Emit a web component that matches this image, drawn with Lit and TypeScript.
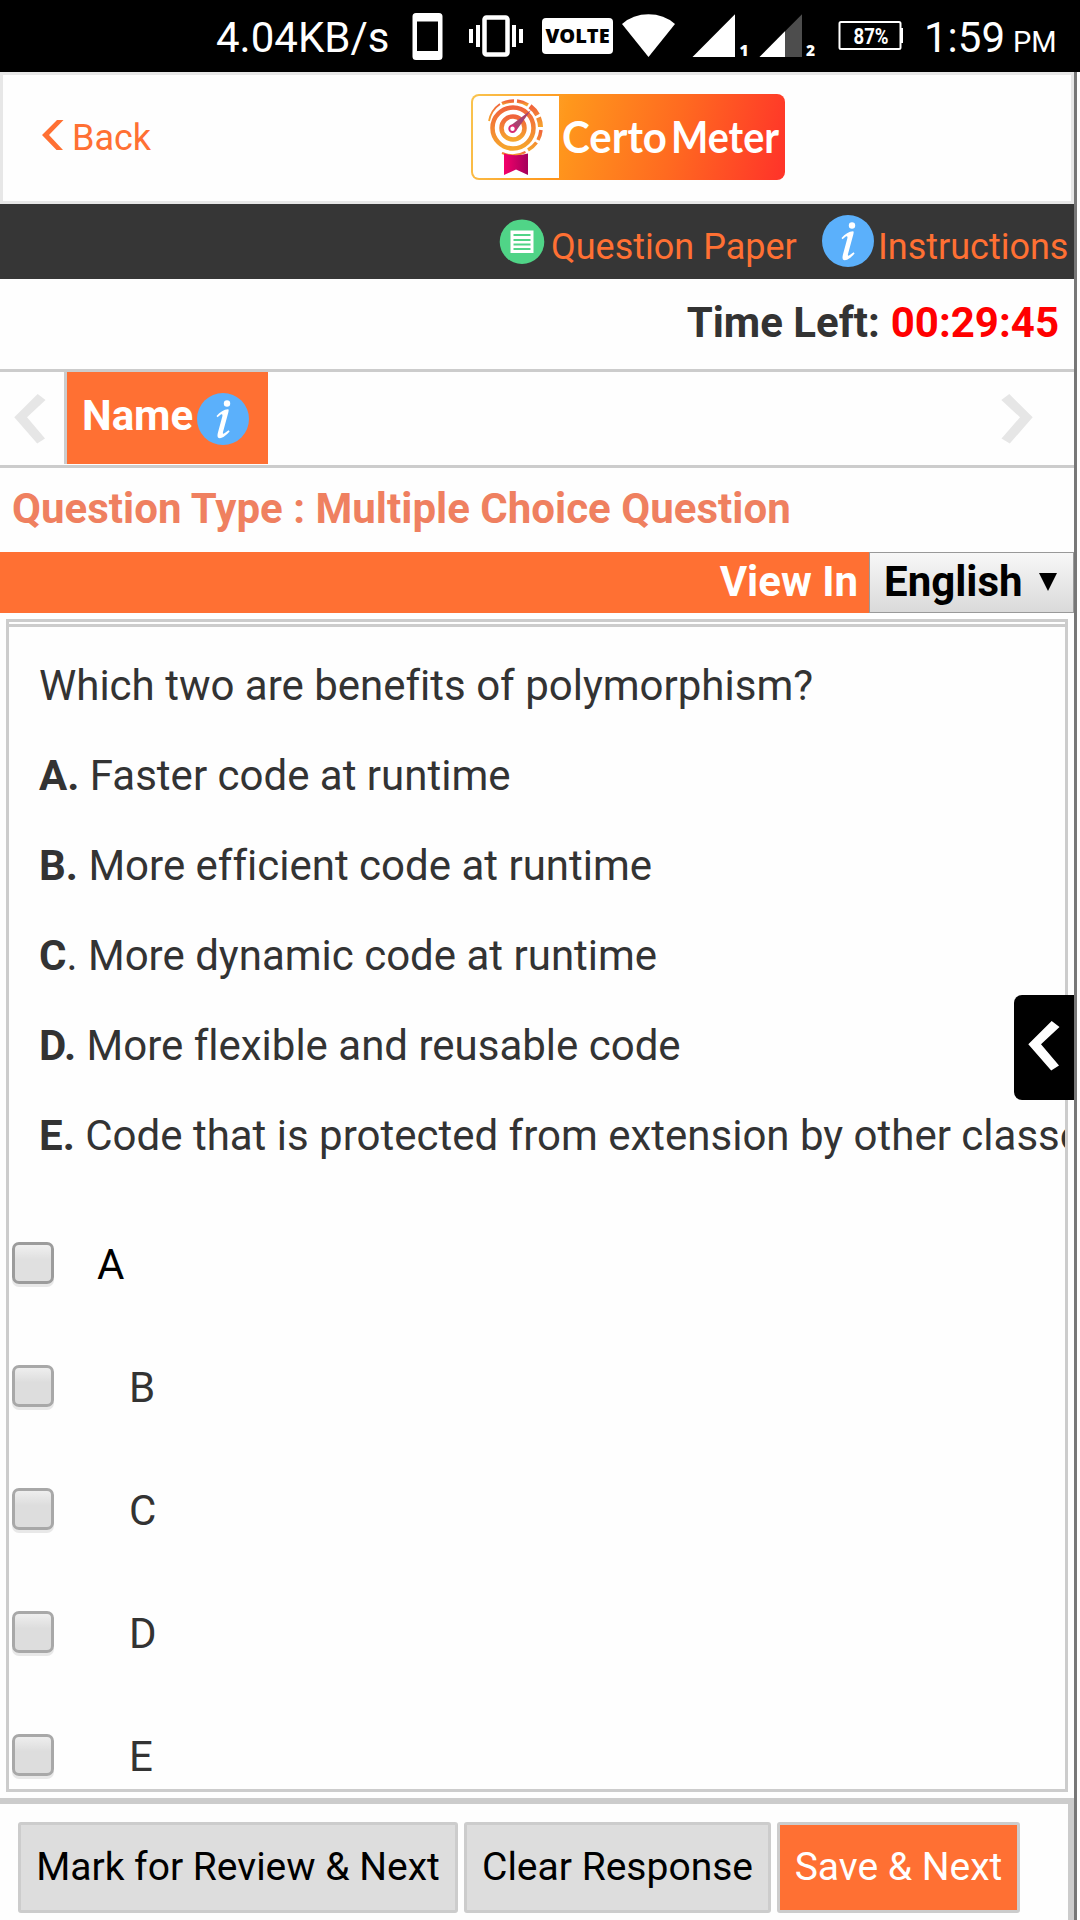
import { LitElement, html, css, svg } from "lit";
import { customElement, property } from "lit/decorators.js";

const STATEMENTS = [
  { key: "A.", dot: "", text: "Faster code at runtime" },
  { key: "B.", dot: "", text: "More efficient code at runtime" },
  { key: "C", dot: ".", text: "More dynamic code at runtime" },
  { key: "D.", dot: "", text: "More flexible and reusable code" },
  { key: "E.", dot: "", text: "Code that is protected from extension by other classes" },
];

const CHOICES = ["A", "B", "C", "D", "E"];

@customElement("info-badge")
class InfoBadge extends LitElement {
  static styles = css`
    :host { display: block; width: 52px; height: 52px; }
    svg { display: block; }
  `;
  render() {
    return html`<svg width="52" height="52" viewBox="0 0 52 52">
      <circle cx="26" cy="26" r="26" fill="#5bb0fb" />
      <circle cx="30" cy="10.5" r="3.2" fill="#fff" />
      <path d="M19.5 23 C23 19 27 16.5 31 16.3 C32 16.3 31.7 18 31.3 19.5 L26 39 C25.6 40.8 26.2 41.2 27.4 40.3 L31.6 37.2 L32.6 38.6 C29.5 42 26 45.2 22.8 45.2 C20.2 45.2 20.2 42.6 20.9 39.8 L25.3 23.4 C25.8 21.4 25.2 20.8 23.8 21.6 L20.5 24.2 Z" fill="#fff" />
    </svg>`;
  }
}

@customElement("status-bar")
class StatusBar extends LitElement {
  static styles = css`
    :host {
      display: grid;
      box-sizing: border-box;
      height: 72px;
      padding-left: 216px;
      grid-template-columns: 196px 57px 73px 80px 69px 68px 78px 87px 89px 1fr;
      background: #000;
      color: #fff;
      white-space: nowrap;
    }
    svg { display: block; }
    .speed, .clock { font-size: 42px; line-height: 50px; padding-top: 13px; }
    .volte {
      box-sizing: border-box; width: 71px; height: 36px; margin-top: 18px; border-radius: 4px;
      background: #fff; color: #000; font: 800 20px/36px "Open Sans", sans-serif; text-align: center;
    }
    .pm { font-size: 29px; line-height: 50px; padding-top: 17px; }
    .sim { font: 800 15.500px/20px "Open Sans", sans-serif; }
  `;
  render() {
    return html`
      <span class="speed">4.04KB/s</span>
      <svg width="31" height="72"><path fill="#fff" fill-rule="evenodd" d="M4 13H27a3.5 3.5 0 0 1 3.500 3.500V56.500a3.500 3.500 0 0 1-3.500 3.500H4A3.500 3.500 0 0 1 .5 56.500V16.500A3.500 3.500 0 0 1 4 13ZM5 21.500V51H26V21.500Z" /></svg>
      <svg width="54" height="72" fill="#fff">
        <path d="M0 29h4v14H0zM7 25h4v22H7zM43 25h4v22h-4zM50 29h4v14h-4z" />
        <rect x="15.500" y="17.500" width="23" height="37" rx="2" fill="none" stroke="#fff" stroke-width="4.500" />
      </svg>
      <span class="volte">VOLTE</span>
      <svg width="54" height="72"><path fill="#fff" d="M0 24Q11 14.300 26.500 14.300T53 24L26.500 57Z" /></svg>
      <svg width="60" height="72">
        <path fill="#fff" d="M1.500 57H44V14.300Z" />
        <text class="sim" x="48.500" y="56" fill="#fff">1</text>
      </svg>
      <svg width="62" height="72">
        <path fill="#4d4d4d" d="M.5 57H43V14.300Z" /><path fill="#fff" d="M.5 57H26V31.300Z" />
        <text class="sim" x="47" y="56" fill="#fff">2</text>
      </svg>
      <svg width="68" height="72">
        <rect x="2.500" y="22" width="61" height="27" rx="1.500" fill="none" stroke="#fff" stroke-width="2" />
        <path fill="#fff" d="M63 28h3v15h-3z" />
        <text x="16.500" y="43.600" fill="#fff" font-weight="700" font-size="22" textLength="35" lengthAdjust="spacingAndGlyphs">87%</text>
      </svg>
      <span class="clock">1:59</span>
      <span class="pm">PM</span>
    `;
  }
}

@customElement("brand-logo")
class BrandLogo extends LitElement {
  static styles = css`
    :host { display: block; width: 314px; height: 86px; }
    svg { display: block; }
    .name { font: 700 44px/50px Lato, sans-serif; fill: #fff; }
  `;
  render() {
    return html`<svg width="314" height="86" viewBox="0 0 314 86">
      <defs>
        <linearGradient id="plate" gradientUnits="userSpaceOnUse" x1="0" y1="10" x2="308" y2="86">
          <stop offset="0" stop-color="#f9c34e" /><stop offset=".3" stop-color="#ff971c" />
          <stop offset=".65" stop-color="#ff6a20" /><stop offset="1" stop-color="#ff3529" />
        </linearGradient>
        <linearGradient id="ring" x1="0" y1="0" x2="0" y2="1">
          <stop offset="0" stop-color="#f0643c" /><stop offset="1" stop-color="#f6a52c" />
        </linearGradient>
        <linearGradient id="ribbon"><stop offset="0" stop-color="#f5006a" /><stop offset="1" stop-color="#a4005c" /></linearGradient>
      </defs>
      <rect width="314" height="86" rx="8" fill="url(#plate)" />
      <path d="M8 2H88V84H8a6 6 0 0 1-6-6V8a6 6 0 0 1 6-6Z" fill="#fff" />
      <g fill="none" stroke="url(#ring)">
        <circle cx="42" cy="34" r="20.500" stroke-width="4.500" />
        <circle cx="42" cy="34" r="11.500" stroke-width="4.500" />
        <path d="M18 27A26.500 26.500 0 0 1 29 10" stroke-width="1.800" />
        <path d="M31 9.500A27 27 0 0 1 43 7M46 7A27 27 0 0 1 57 11" stroke-width="3.500" />
        <path d="M59 12.300A27.500 27.500 0 0 1 66.500 21M67.500 23.500A27.500 27.500 0 0 1 69.500 33" stroke-width="5" />
        <path d="M70 36A28 28 0 0 1 67 46M65.500 48.500A28 28 0 0 1 57 56" stroke-width="3.500" />
        <path d="M54.500 58A27 27 0 0 1 31 59" stroke-width="2" />
      </g>
      <path d="M39 32L60 16L45 37Z" fill="#a84370" />
      <circle cx="41.500" cy="34.800" r="3.200" fill="#fff" stroke="#d62c72" stroke-width="2" />
      <path d="M33 59.500Q45 63 57 59.500V81L45 75.500L33 81Z" fill="url(#ribbon)" />
      <text class="name" x="91" y="58.500" textLength="105" lengthAdjust="spacingAndGlyphs">Certo</text>
      <text class="name" x="200" y="58.500" textLength="108" lengthAdjust="spacingAndGlyphs">Meter</text>
    </svg>`;
  }
}

@customElement("answer-choice")
class AnswerChoice extends LitElement {
  @property() label = "";
  @property({ type: Boolean, reflect: true }) active = false;

  static styles = css`
    :host { display: flex; align-items: flex-start; height: 123px; font-size: 42px; line-height: 50px; color: #333; }
    .box {
      appearance: none; box-sizing: border-box; width: 42px; height: 42px; margin: 2px 75px 0 3px;
      border: 3px solid #a8a8a8; border-radius: 7px;
      background: linear-gradient(#eee, #ddd 40%, #ddd);
      box-shadow: 0 3px 0 #e8e8e8;
    }
    :host([active]) { color: #000; }
    :host([active]) .box { border-color: #9c9c9c; margin-right: 43px; background: linear-gradient(#f0f0f0, #e0e0e0 40%, #e0e0e0); }
  `;
  render() {
    return html`<input class="box" type="checkbox" aria-label=${this.label} /><span>${this.label}</span>`;
  }
}

@customElement("app-root")
class AppRoot extends LitElement {
  static styles = css`
    :host {
      display: block; width: 1080px; height: 1920px; overflow: hidden; background: #fefefe;
      font-family: Roboto, sans-serif; color: #333; font-variant-ligatures: none;
    }
    svg { display: block; }
    .page {
      position: relative; box-sizing: border-box; width: 1077px; height: 1848px;
      display: flex; flex-direction: column; border-right: 3px solid #777; white-space: nowrap;
    }
    .page > * { flex: none; box-sizing: border-box; }
    .header { display: flex; height: 132px; border: 3px solid #e7e7e7; padding: 19px 0 0 39px; }
    .back { display: flex; width: 429px; color: #ff7033; font-size: 36px; line-height: 44px; }
    .back svg { margin: 26px 8px 0 0; }
    .back span { padding-top: 22px; }
    .tools { display: flex; height: 75px; background: #363636; color: #ff7033; font-size: 36px; line-height: 44px; padding-left: 499px; }
    .tools span { padding-top: 21px; }
    .tools svg { margin: 15px 6px 0 0; }
    .paper { width: 271px; }
    .tools info-badge { margin: 11px 4px 0 0; }
    .timer { display: flex; justify-content: flex-end; gap: 11px; height: 93px; border-bottom: 3px solid #ccc; padding: 19px 15px 0 0; font-weight: 700; font-size: 42px; line-height: 50px; }
    .clock { color: #f00; }
    .tabs { display: flex; height: 96px; border-bottom: 3px solid #ccc; }
    .prev { width: 64px; padding: 22px 0 0 14px; box-sizing: border-box; }
    .tab { display: flex; box-sizing: border-box; width: 204px; height: 92px; padding-left: 15px; border-left: 3px solid #ccc; background: #ff7033; color: #fff; font-weight: 700; font-size: 42px; line-height: 50px; }
    .tab span { width: 115px; padding-top: 19px; }
    .tab info-badge { margin-top: 21px; }
    .next { margin-left: auto; padding: 22px 41px 0 0; }
    .kind { height: 84px; padding: 16px 0 0 12px; color: #ef8060; font-weight: 700; font-size: 42px; line-height: 50px; letter-spacing: .02px; }
    .view { display: flex; justify-content: flex-end; height: 61px; background: #ff7033; color: #fff; font-weight: 700; font-size: 42px; line-height: 50px; }
    .view > span { padding: 5px 11px 0 0; }
    .lang { display: flex; box-sizing: border-box; justify-content: space-between; width: 205px; border: 1px solid #999; background: linear-gradient(#f7f7f7, #dadada); color: #000; padding: 4px 16px 0 14px; }
    .lang svg { margin-top: 16px; }
    .question { height: 1173px; width: 1062px; margin: 6px 0 0 6px; border: 3px solid #ccc; overflow: hidden; padding-top: 2px; }
    .statement { border-top: 3px solid #ccc; padding: 34px 0 0 30px; font-size: 42px; line-height: 50px; }
    .line { margin: 0 0 40px; }
    .choices { padding-top: 39px; }
    .footer { display: flex; align-items: flex-start; gap: 6px; height: 122px; margin-top: 6px; border-top: 6px solid #ccc; border-right: 6px solid #ccc; padding: 18px 0 0 18px; }
    .btn {
      box-sizing: border-box; height: 91px; margin: 0; padding: 0 0 1px; border: 3px solid #ccc; border-radius: 3px; background: #ddd; color: #000;
      font: 39px/50px Roboto, sans-serif; text-align: center;
    }
    .mark { width: 440px; }
    .clear { width: 307px; }
    .save { width: 243px; background: #ff7033; color: #fff; }
    .drawer { position: absolute; right: 0; top: 923px; width: 60px; height: 105px; border: 0; border-radius: 8px 0 0 8px; background: #000; padding: 0 0 3px 14px; }
  `;

  private chevron(color: string, flip = false) {
    return html`<svg width="32" height="50" viewBox="0 0 32 50" fill=${color}>
      ${flip
        ? svg`<path d="M.3 6L8.300 0L31.700 23.300L8.800 49.500L.5 44.500L19 23.300Z" />`
        : svg`<path d="M31.500 6L23.700 0L.3 23.300L23.200 49.500L31 44.500L13 23.300Z" />`}
    </svg>`;
  }

  render() {
    return html`
      <status-bar></status-bar>
      <main class="page">
        <header class="header">
          <div class="back">
            <svg width="22" height="30" viewBox="0 0 22 30"><path d="M15 0H21.500L7 15L21 30H14.500L0 15Z" fill="#ff7033" /></svg>
            <span>Back</span>
          </div>
          <brand-logo></brand-logo>
        </header>
        <nav class="tools">
          <svg width="46" height="46" viewBox="0 0 46 46">
            <circle cx="23" cy="22.700" r="22.300" fill="#50d487" />
            <path d="M11.500 11.500H34.500V34H11.500Z" fill="#fff" />
            <path d="M14.500 16h17M14.500 21h17M14.500 25.500h17M14.500 30h17" stroke="#50d487" stroke-width="2" />
          </svg>
          <span class="paper">Question Paper</span>
          <info-badge></info-badge>
          <span>Instructions</span>
        </nav>
        <section class="timer"><span>Time Left:</span><span class="clock">00:29:45</span></section>
        <section class="tabs">
          <div class="prev">${this.chevron("#e6e6e6")}</div>
          <div class="tab"><span>Name</span><info-badge></info-badge></div>
          <div class="next">${this.chevron("#e6e6e6", true)}</div>
        </section>
        <section class="kind">Question Type : Multiple Choice Question</section>
        <section class="view">
          <span>View In</span>
          <div class="lang">
            <span>English</span>
            <svg width="18" height="18" viewBox="0 0 18 18"><path d="M0 0H18L9 18Z" /></svg>
          </div>
        </section>
        <section class="question">
          <div class="statement">
            <p class="line">Which two are benefits of polymorphism?</p>
            ${STATEMENTS.map((s) => html`<p class="line"><b>${s.key}</b>${s.dot} ${s.text}</p>`)}
          </div>
          <div class="choices">
            ${CHOICES.map((c, i) => html`<answer-choice label=${c} ?active=${i === 0}></answer-choice>`)}
          </div>
        </section>
        <footer class="footer">
          <button class="btn mark">Mark for Review &amp; Next</button>
          <button class="btn clear">Clear Response</button>
          <button class="btn save">Save &amp; Next</button>
        </footer>
        <button class="drawer" aria-label="Open panel">${this.chevron("#fff")}</button>
      </main>
    `;
  }
}
